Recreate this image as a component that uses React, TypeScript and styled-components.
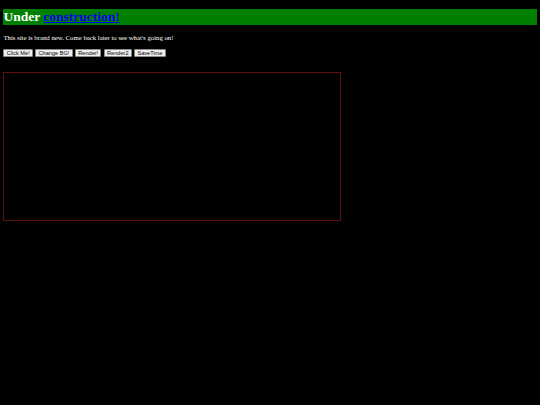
import React from 'react'
import styled, { createGlobalStyle } from 'styled-components'

const GlobalStyle = createGlobalStyle`
  html, body {
    background: #000;
  }
  body {
    margin: 0;
    padding: 0 3.4px;
    color: #fff;
    font-family: 'Liberation Serif', 'Times New Roman', serif;
  }
`

const Title = styled.h1`
  margin: 9px 0;
  padding: 0;
  background: #008000;
  color: #fff;
  font-size: 13.5px;
  font-weight: bold;
  line-height: 15.5px;
`

const TitleLink = styled.a`
  color: #0000ee;
  text-decoration: underline;
`

const Intro = styled.p`
  margin: 9px 0 7.6px;
  font-size: 6.75px;
  line-height: 7.8px;
`

const Toolbar = styled.div`
  display: flex;
  gap: 2.3px;
  align-items: center;
  height: 8.4px;
`

const Button = styled.button`
  height: 8.4px;
  padding: 0 2.3px;
  background: #efefef;
  color: #000;
  border: 0.6px solid #8a8a8a;
  border-radius: 1px;
  font-family: 'Liberation Sans', Arial, sans-serif;
  font-size: 5.6px;
  line-height: 6px;
  cursor: pointer;
`

const Canvas = styled.div`
  box-sizing: border-box;
  width: 338px;
  height: 148.5px;
  margin-top: 15px;
  border: 1px solid #5e1010;
  background: #000;
`

const buttons = ['Click Me!', 'Change BG!', 'Render!', 'Render2', 'SaveTime']

const App = () => {
  return (
    <>
      <GlobalStyle />
      <Title>
        Under <TitleLink href="#">construction!</TitleLink>
      </Title>
      <Intro>This site is brand new. Come back later to see what's going on!</Intro>
      <Toolbar>
        {buttons.map((label) => (
          <Button key={label}>{label}</Button>
        ))}
      </Toolbar>
      <Canvas />
    </>
  )
}

export default App
